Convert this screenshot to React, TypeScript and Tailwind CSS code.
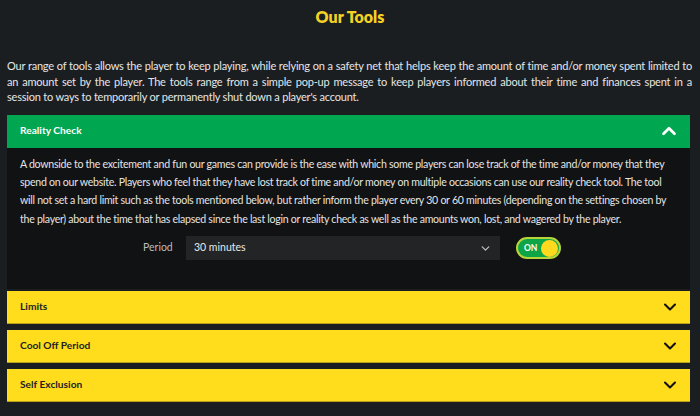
import { ChevronDown, ChevronUp } from "lucide-react";

const font = { fontFamily: "Lato, 'Noto Sans', sans-serif" };

function Closed({ title }: { title: string }) {
  return (
    <div className="flex h-[33px] items-center justify-between border-b border-[#b8a01a] bg-[#ffdd1d] pl-[13px] pr-[10px]">
      <span className="text-[10.2px] font-bold text-[#222]">{title}</span>
      <ChevronDown className="h-[20px] w-[20px] text-[#111]" strokeWidth={2.5} />
    </div>
  );
}

export default function App() {
  return (
    <div className="h-[416px] w-[700px] overflow-hidden bg-[#1b1e21] text-[#e8e8e8]" style={font}>
      <h1 className="pt-[6px] text-center text-[16px] font-extrabold leading-[22px] text-[#f3d225]">
        Our Tools
      </h1>
      <p className="mt-[30px] pl-[7px] pr-[8px] text-justify text-[11px] leading-[15.5px] tracking-[-0.2px] text-[#e6e6e6]">
        Our range of tools allows the player to keep playing, while relying on a safety net that helps keep the amount of time and/or money spent limited to an amount set by the player. The tools range from a simple pop-up message to keep players informed about their time and finances spent in a session to ways to temporarily or permanently shut down a player's account.
      </p>
      <div className="mt-[10px] ml-[7px] flex w-[683px] flex-col gap-[6px]">
        <div className="mb-[-4px]">
          <div className="flex h-[33px] items-center justify-between bg-[#00a650] pl-[13px] pr-[10px]">
            <span className="text-[10.2px] font-bold text-white">Reality Check</span>
            <ChevronUp className="h-[22px] w-[22px] text-white" strokeWidth={3} />
          </div>
          <div className="bg-[#111213] px-[13px] pt-[7px] pb-[29px]">
            <p className="text-[10.6px] leading-[18.4px] tracking-[-0.28px] text-[#e4e4e4]">
              A downside to the excitement and fun our games can provide is the ease with which some players can lose track of the time and/or money that they spend on our website. Players who feel that they have lost track of time and/or money on multiple occasions can use our reality check tool. The tool will not set a hard limit such as the tools mentioned below, but rather inform the player every 30 or 60 minutes (depending on the settings chosen by the player) about the time that has elapsed since the last login or reality check as well as the amounts won, lost, and wagered by the player.
            </p>
            <div className="mt-[8px] flex items-center">
              <span className="ml-[123px] w-[43px] text-[10.5px] text-[#b9bcc2]">Period</span>
              <div className="flex h-[24px] w-[314px] items-center justify-between bg-[#232425] pl-[8px] pr-[8px]">
                <span className="text-[10.5px] text-[#e8e8e8]">30 minutes</span>
                <ChevronDown className="h-[13px] w-[13px] text-[#bbb]" strokeWidth={2.5} />
              </div>
              <div className="ml-[16px] flex h-[22px] w-[45px] items-center justify-between rounded-full border-2 border-[#b9d43a] bg-[#0da547] pl-[6px] pr-[1px]">
                <span className="text-[8.5px] font-bold text-white">ON</span>
                <span className="h-[17px] w-[17px] rounded-full bg-[#ffd91e]" />
              </div>
            </div>
          </div>
        </div>
        <Closed title="Limits" />
        <Closed title="Cool Off Period" />
        <Closed title="Self Exclusion" />
      </div>
    </div>
  );
}
